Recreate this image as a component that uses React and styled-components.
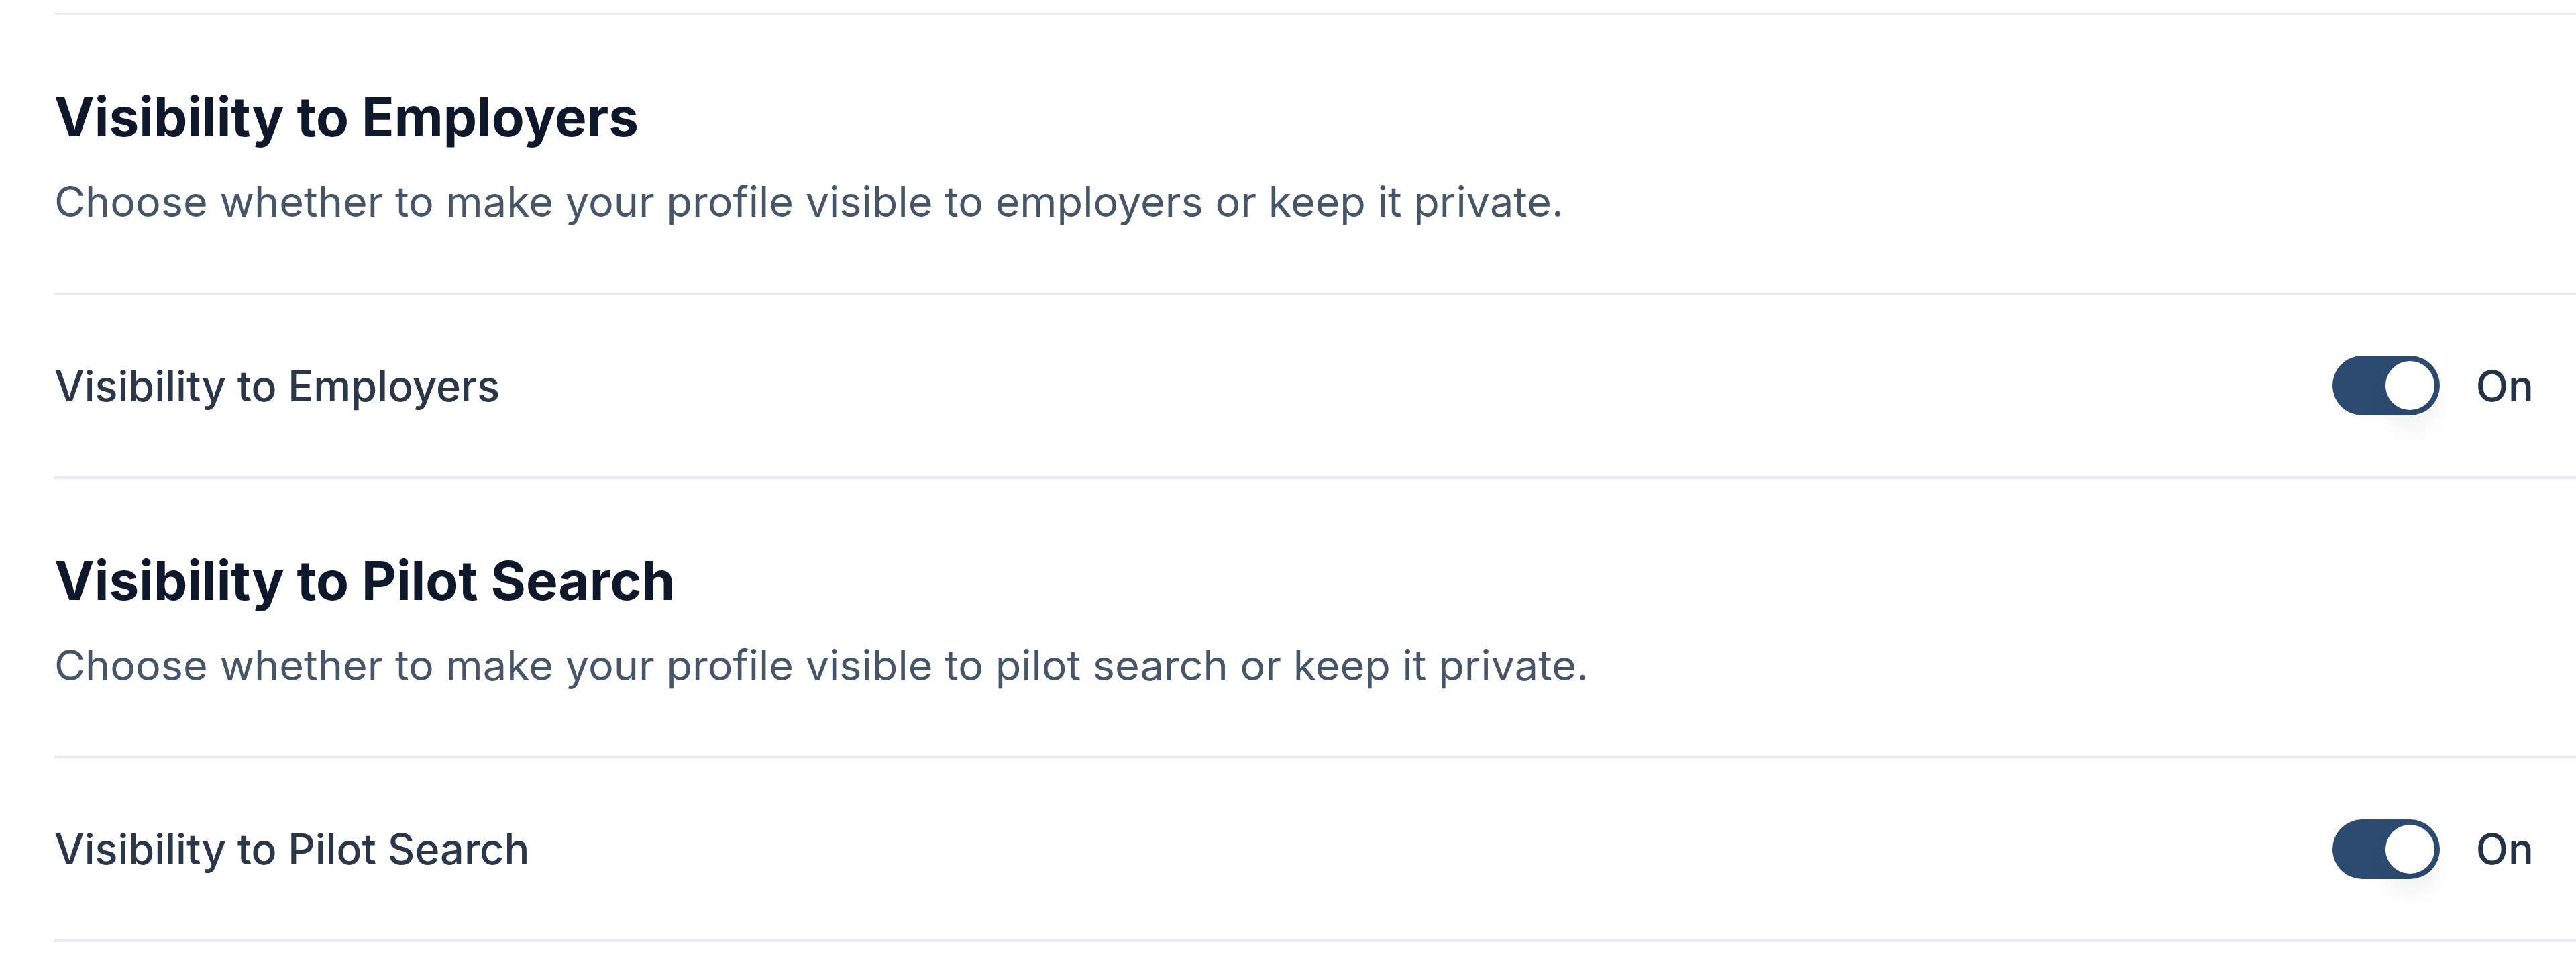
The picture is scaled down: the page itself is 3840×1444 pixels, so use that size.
import React from "react";
import styled, { createGlobalStyle } from "styled-components";

const GlobalStyle = createGlobalStyle`
  html, body {
    margin: 0;
    padding: 0;
    background: #ffffff;
  }
  body {
    font-family: Inter, "Noto Sans", "Liberation Sans", sans-serif;
    -webkit-font-smoothing: antialiased;
  }
`;

const Page = styled.div`
  padding: 19px 0 0 81px;
  display: flex;
  flex-direction: column;
`;

const SectionHeader = styled.div`
  border-top: 4px solid #e8eaef;
  padding: 101px 0 88px 0;
  display: flex;
  flex-direction: column;
`;

const Title = styled.h2`
  margin: 0;
  font-size: 80px;
  line-height: 1.25;
  font-weight: 700;
  color: #0f172a;
`;

const Description = styled.p`
  margin: 29px 0 0 0;
  font-size: 63px;
  line-height: 1.5;
  font-weight: 400;
  color: #475569;
`;

const SettingRow = styled.div`
  border-top: 4px solid #e8eaef;
  border-bottom: ${(p) => (p.$last ? "4px solid #e8eaef" : "none")};
  height: 270px;
  padding-right: 63px;
  display: flex;
  align-items: center;
  justify-content: space-between;
`;

const Label = styled.span`
  font-size: 63px;
  font-weight: 500;
  color: #2b3648;
`;

const ToggleGroup = styled.div`
  display: flex;
  align-items: center;
  gap: 54px;
`;

const Track = styled.button`
  position: relative;
  width: 160px;
  height: 89px;
  border: none;
  padding: 8px;
  border-radius: 999px;
  background: ${(p) => (p.$on ? "#2d4b70" : "#cbd5e1")};
  display: flex;
  align-items: center;
  justify-content: ${(p) => (p.$on ? "flex-end" : "flex-start")};
  cursor: pointer;
`;

const Knob = styled.span`
  width: 73px;
  height: 73px;
  border-radius: 50%;
  background: #ffffff;
  box-shadow: 0 26px 34px rgba(15, 23, 42, 0.07);
`;

const StateText = styled.span`
  font-size: 63px;
  font-weight: 500;
  color: #263347;
`;

function Toggle({ on }) {
  return (
    <ToggleGroup>
      <Track $on={on} aria-pressed={on}>
        <Knob />
      </Track>
      <StateText>{on ? "On" : "Off"}</StateText>
    </ToggleGroup>
  );
}

const sections = [
  {
    title: "Visibility to Employers",
    description:
      "Choose whether to make your profile visible to employers or keep it private.",
    label: "Visibility to Employers",
    on: true,
  },
  {
    title: "Visibility to Pilot Search",
    description:
      "Choose whether to make your profile visible to pilot search or keep it private.",
    label: "Visibility to Pilot Search",
    on: true,
  },
];

export default function App() {
  return (
    <>
      <GlobalStyle />
      <Page>
        {sections.map((s, i) => (
          <React.Fragment key={s.title}>
            <SectionHeader>
              <Title>{s.title}</Title>
              <Description>{s.description}</Description>
            </SectionHeader>
            <SettingRow $last={i === sections.length - 1}>
              <Label>{s.label}</Label>
              <Toggle on={s.on} />
            </SettingRow>
          </React.Fragment>
        ))}
      </Page>
    </>
  );
}
